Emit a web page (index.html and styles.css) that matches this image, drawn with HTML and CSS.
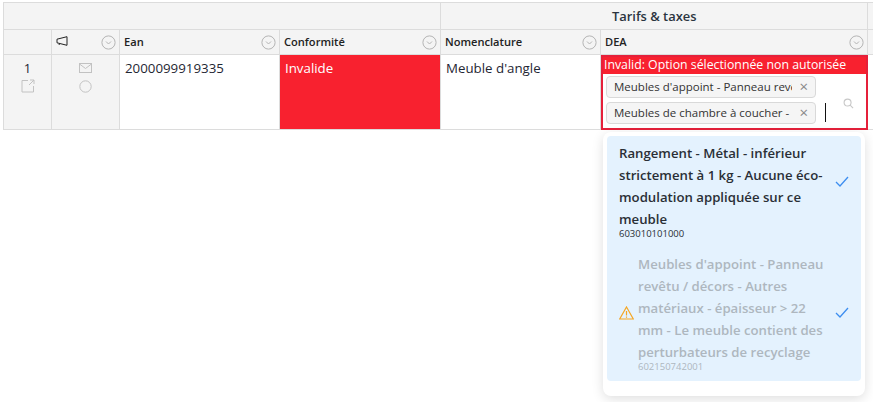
FILE: index.html
```html
<!DOCTYPE html>
<html lang="fr">
<head>
<meta charset="utf-8">
<title>Tarifs &amp; taxes</title>
<link rel="stylesheet" href="styles.css">
</head>
<body>
<div class="sheet">
  <div class="grid">
    <div class="cell group g1"></div>
    <div class="cell group g2">Tarifs &amp; taxes</div>
    <div class="cell group g3"></div>

    <div class="cell head"></div>
    <div class="cell head"><svg class="mega" viewBox="0 0 12 10"><path d="M1 3.2 L11 .7 V9.3 L1 6.8 Z M3.6 7.4 L3 9" fill="none" stroke="#222" stroke-width="1"/></svg><svg class="chev" viewBox="0 0 15 15"><circle cx="7.5" cy="7.5" r="6.6"/><path d="M5 6.5 L7.5 9 L10 6.5"/></svg></div>
    <div class="cell head"><span class="lbl">Ean</span><svg class="chev" viewBox="0 0 15 15"><circle cx="7.5" cy="7.5" r="6.6"/><path d="M5 6.5 L7.5 9 L10 6.5"/></svg></div>
    <div class="cell head"><span class="lbl">Conformité</span><svg class="chev" viewBox="0 0 15 15"><circle cx="7.5" cy="7.5" r="6.6"/><path d="M5 6.5 L7.5 9 L10 6.5"/></svg></div>
    <div class="cell head"><span class="lbl">Nomenclature</span><svg class="chev" viewBox="0 0 15 15"><circle cx="7.5" cy="7.5" r="6.6"/><path d="M5 6.5 L7.5 9 L10 6.5"/></svg></div>
    <div class="cell head"><span class="lbl">DEA</span><svg class="chev" viewBox="0 0 15 15"><circle cx="7.5" cy="7.5" r="6.6"/><path d="M5 6.5 L7.5 9 L10 6.5"/></svg></div>
    <div class="cell head"></div>

    <div class="cell side num"><span>1</span>
      <svg class="ico" viewBox="0 0 14 14"><path d="M7 1.5 H1 V13 H12.5 V7 M8 6 L13 1 M9 1 H13 V5"/></svg>
    </div>
    <div class="cell side acts">
      <svg class="ico mail" viewBox="0 0 13 10"><rect x=".5" y=".5" width="12" height="9"/><path d="M.5 1 L6.5 5.5 L12.5 1"/></svg>
      <svg class="ico round" viewBox="0 0 13 13"><circle cx="6.5" cy="6.5" r="5.7"/></svg>
    </div>
    <div class="cell body">2000099919335</div>
    <div class="cell body bad">Invalide</div>
    <div class="cell body">Meuble d'angle</div>
    <div class="cell editor">
      <div class="err">Invalid: Option sélectionnée non autorisée</div>
      <div class="field">
        <div class="tags">
          <div class="tag"><span class="tag-text">Meubles d'appoint - Panneau revêtu</span><span class="x">×</span></div>
          <div class="tag"><span class="tag-text">Meubles de chambre à coucher -</span><span class="x">×</span></div>
        </div>
        <span class="caret"></span>
        <svg class="search" viewBox="0 0 12 12"><circle cx="5" cy="5" r="3.8"/><path d="M7.8 7.8 L11 11"/></svg>
      </div>
    </div>
    <div class="cell blank"></div>
  </div>

  <div class="popup-wrap">
    <div class="popup">
      <div class="opt first">
        <div class="opt-main">
          <div class="opt-title">Rangement - Métal - inférieur strictement à 1 kg - Aucune éco-modulation appliquée sur ce meuble</div>
          <div class="opt-code">603010101000</div>
        </div>
        <svg class="check" viewBox="0 0 14 11"><path d="M1 6 L5 10 L13 1"/></svg>
      </div>
      <div class="opt off">
        <svg class="warn" viewBox="0 0 15 14"><path d="M7.5 1 L14.3 13 H.7 Z"/><path d="M7.5 5 V9.5 M7.5 10.5 V11.8"/></svg>
        <div class="opt-main">
          <div class="opt-title">Meubles d'appoint - Panneau revêtu / décors - Autres matériaux - épaisseur &gt; 22 mm - Le meuble contient des perturbateurs de recyclage</div>
          <div class="opt-code">602150742001</div>
        </div>
        <svg class="check" viewBox="0 0 14 11"><path d="M1 6 L5 10 L13 1"/></svg>
      </div>
    </div>
  </div>
</div>
</body>
</html>
```
FILE: styles.css
```css
* { box-sizing: border-box; }
html, body { margin: 0; padding: 0; background: #fff; overflow: hidden; }
body { font-family: "Open Sans", "Noto Sans", sans-serif; color: #1f2733; }
.sheet { width: 873px; height: 402px; padding: 2px 0 0 3px; display: flex; flex-direction: column; }
.grid {
  display: grid;
  grid-template-columns: 48px 68px 160px 161px 160px 267px 5px;
  grid-template-rows: 27px 25px 75px;
  width: 870px;
  border-top: 1px solid #dcdcdc;
  border-left: 1px solid #dcdcdc;
}
.cell { border-right: 1px solid #dcdcdc; border-bottom: 1px solid #dcdcdc; min-width: 0; }
.group { background: #f4f4f4; font-size: 12.9px; font-weight: 600; display: flex; align-items: center; }
.g1 { grid-column: 1 / 5; }
.g2 { grid-column: 5 / 7; color: #2b3440; padding-left: 171px; }
.g3 { border-right: 0; }
.head { background: #f4f4f4; font-size: 11.1px; font-weight: 600; display: flex; align-items: center; justify-content: space-between; padding: 0 3px 0 4px; color: #222; }
.lbl { padding-bottom: 1px; }
.chev { width: 15px; height: 15px; fill: none; stroke: #b4b4b4; stroke-width: 1; }
.mega { width: 12px; height: 10px; margin-bottom: 3px; }
.side { background: #f4f4f4; display: flex; flex-direction: column; align-items: center; }
.num { font-size: 13px; padding-top: 6px; gap: 4px; }
.num span { line-height: 14px; }
.ico { fill: none; stroke: #c2c2c2; stroke-width: 1; width: 14px; height: 14px; }
.acts { padding-top: 8px; gap: 7px; }
.mail { width: 13px; height: 10px; }
.round { width: 13px; height: 13px; }
.body { background: #fff; font-size: 13.3px; padding: 4px 5px; line-height: 19px; }
.bad { background: #f8212f; color: #fff; }
.editor { background: #f8212f; border: 2px solid #e5203a; display: flex; flex-direction: column; }
.err { color: #fff; font-size: 12.3px; line-height: 15px; padding-left: 1px; height: 17px; white-space: nowrap; flex: none; }
.field { flex: 1; background: #fff; display: flex; align-items: flex-start; padding: 2px 0 0 3px; min-height: 0; }
.tags { display: flex; flex-direction: column; gap: 4px; width: 212px; flex: none; }
.tag { height: 22px; width: 210px; background: #f5f5f5; border: 1px solid #d9d9d9; border-radius: 4px; display: flex; align-items: center; padding: 0 7px 2px 7px; font-size: 11.5px; color: #333; }
.tag-text { width: 178px; overflow: hidden; white-space: nowrap; flex: none; }
.x { margin-left: auto; font-size: 15px; color: #888; line-height: 1; }
.caret { width: 1px; height: 19px; background: #111; margin: 27px 0 0 7px; }
.search { width: 11px; height: 11px; margin: 22px 0 0 17px; fill: none; stroke: #c8c8c8; stroke-width: 1.2; }
.blank { background: #fff; border-right: 0; }
.popup-wrap { display: flex; justify-content: flex-end; padding: 2px 5px 0 0; }
.popup { width: 262px; height: 264px; background: #fff; border-radius: 8px; box-shadow: 0 3px 12px rgba(0,0,0,.13); padding: 4px; margin-right: 3px; }
.opt { background: #e4f2fe; display: flex; align-items: center; padding: 6px 0 8px 12px; }
.first { border-radius: 4px 4px 0 0; }
.off { border-radius: 0 0 4px 4px; padding-bottom: 9px; }
.opt-main { flex: 1; min-width: 0; }
.opt-title { font-size: 13.2px; font-weight: 600; line-height: 22px; color: #2a2f36; }
.opt-code { font-size: 9.5px; line-height: 10px; margin-top: -1px; color: #2a2f36; }
.off .opt-title, .off .opt-code { color: #aeb7bf; }
.off .opt-code { font-weight: 400; }
.check { flex: none; width: 14px; height: 11px; margin: 0 12px 0 7px; fill: none; stroke: #3d8ef0; stroke-width: 1.3; }
.first .check { margin-bottom: 18px; }
.warn { flex: none; width: 15px; height: 14px; margin-right: 4px; fill: none; stroke: #f5a623; stroke-width: 1.2; }
```
